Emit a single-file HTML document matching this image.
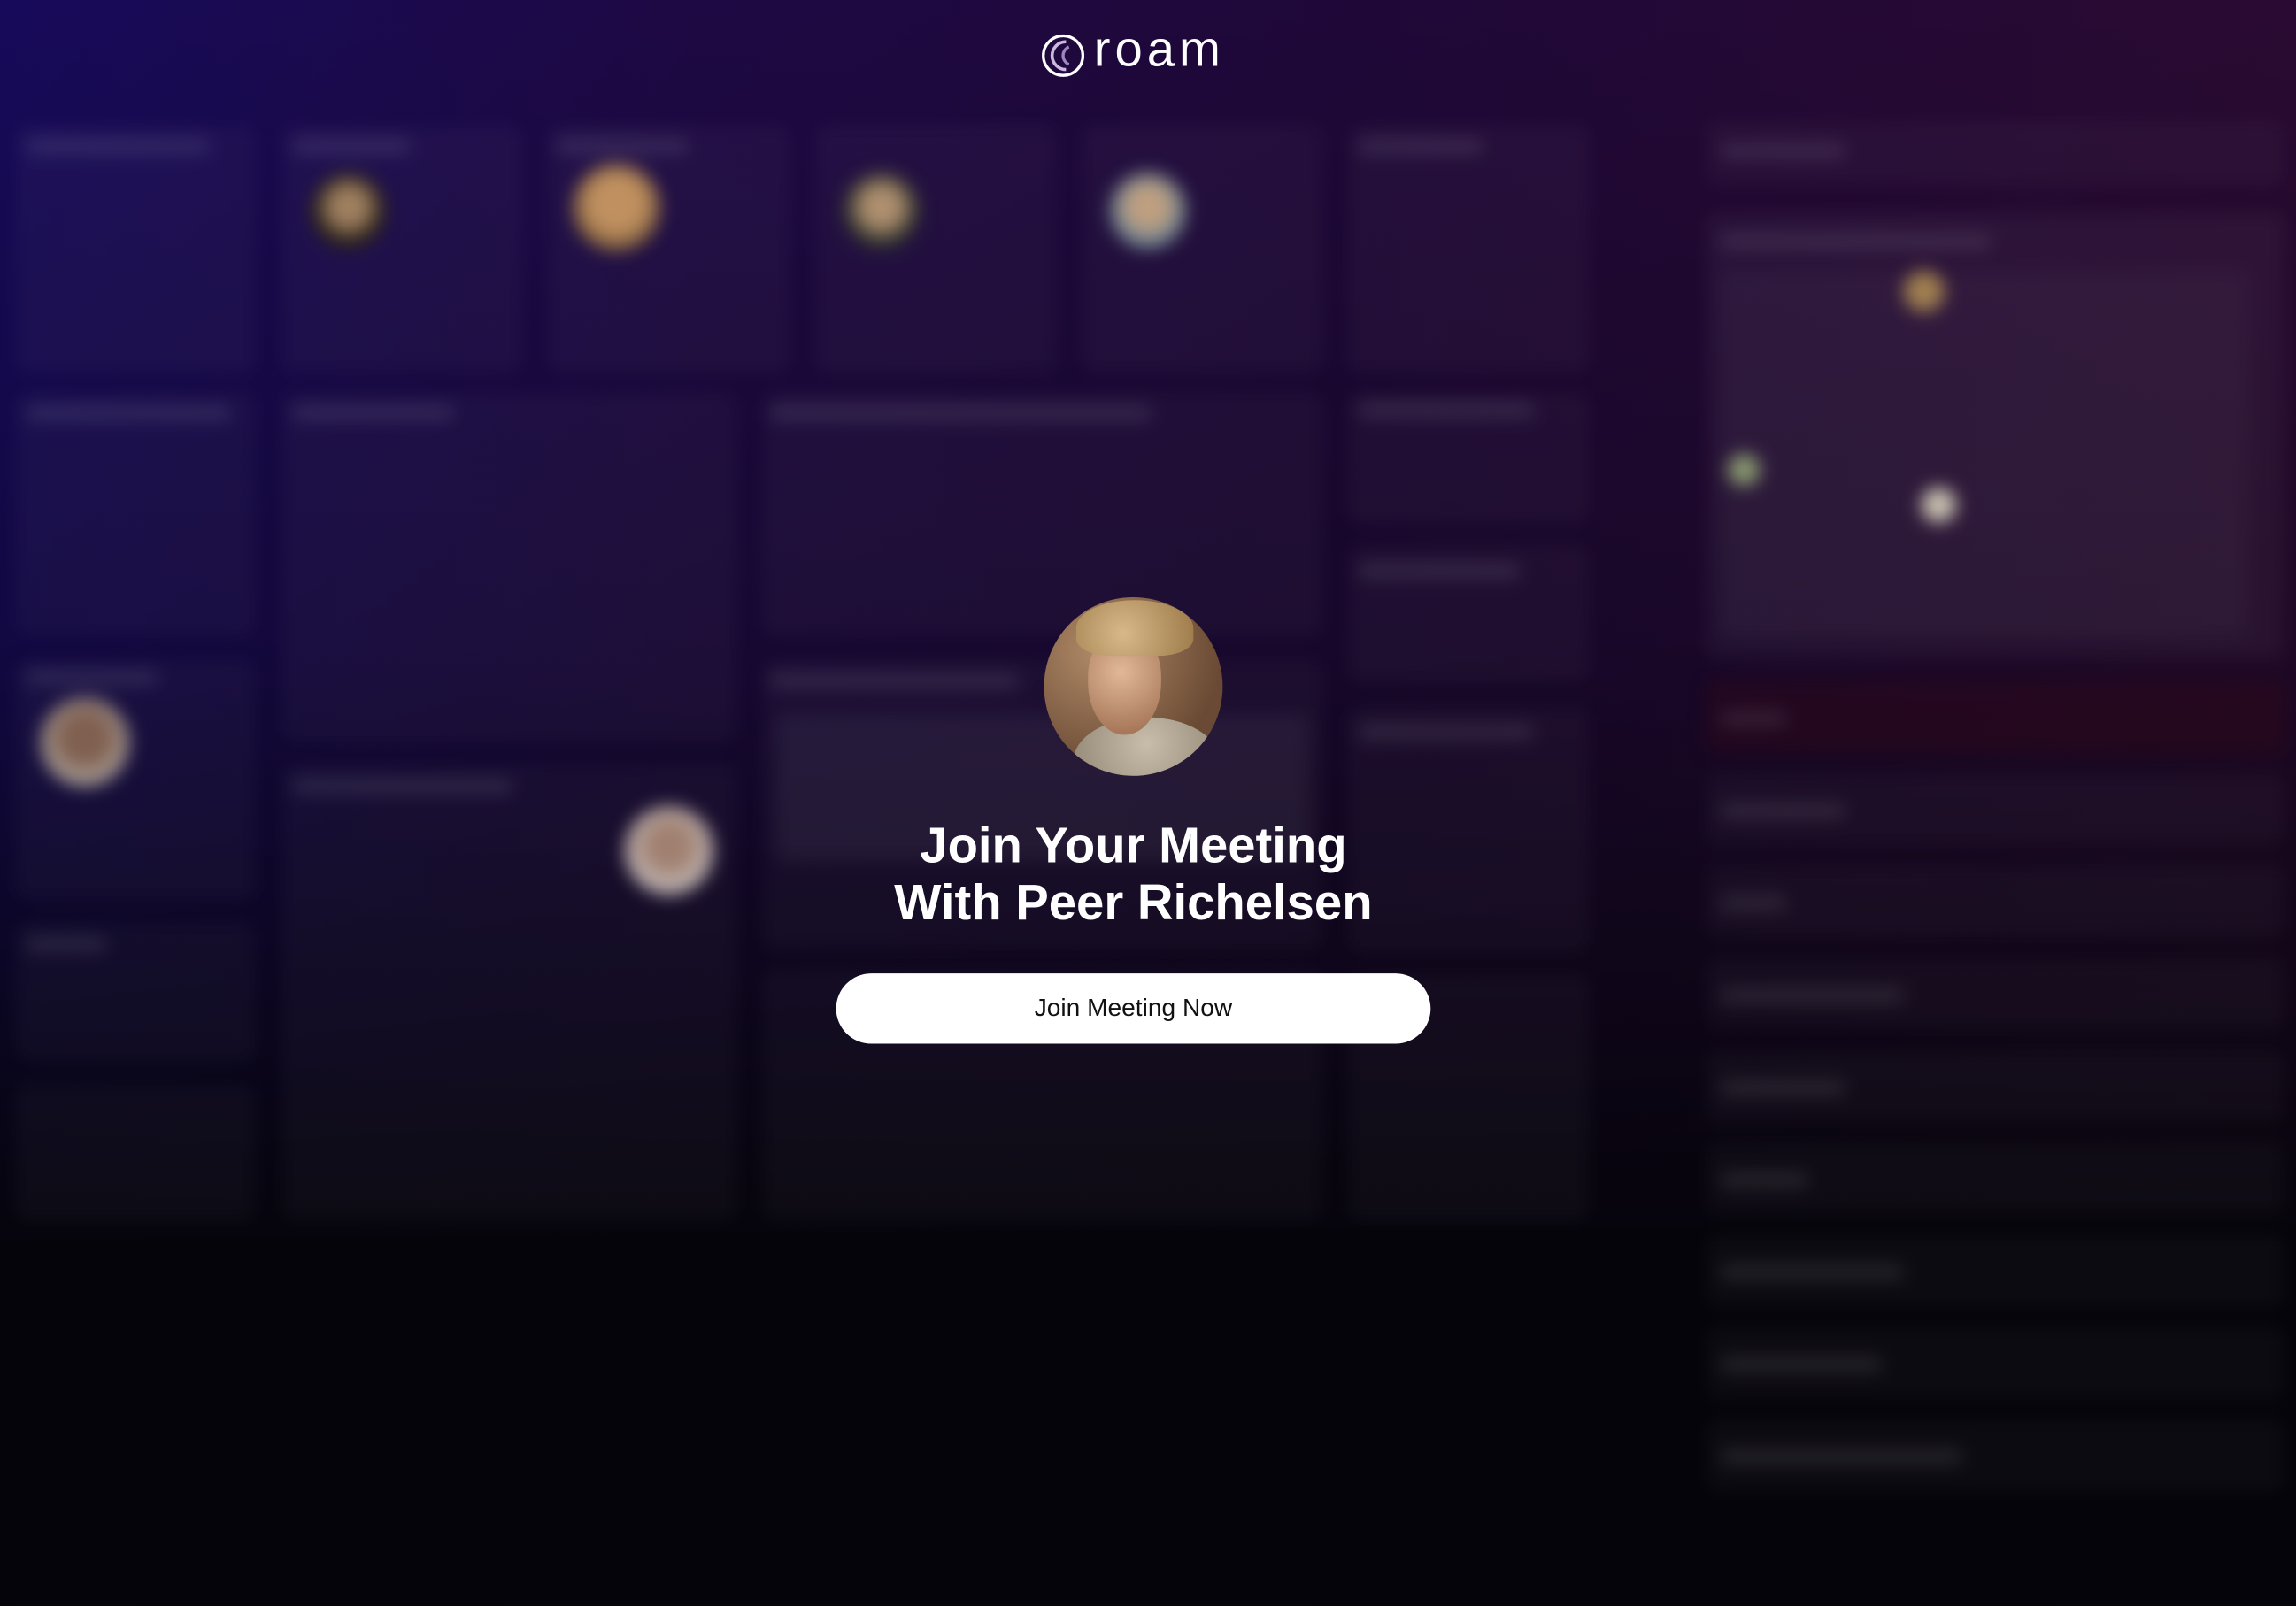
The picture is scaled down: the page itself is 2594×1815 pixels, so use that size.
<!DOCTYPE html>
<html><head><meta charset="utf-8"><style>
html,body{margin:0;padding:0;width:2594px;height:1814px;overflow:hidden;background:#05040a}
#s{position:absolute;left:0;top:0;width:1568px;height:1097px;transform:scale(1.65434);transform-origin:0 0;overflow:hidden;
background:linear-gradient(180deg,rgba(5,4,10,0) 0%,rgba(5,4,10,0.3) 40%,rgba(5,4,10,0.75) 65%,#05040a 78%,#05040a 100%),
linear-gradient(90deg,#170a5a 0%,#1e0944 30%,#1f0838 60%,#2a0a32 100%);}
.bg{position:absolute;inset:0;filter:blur(6px)}
.c{position:absolute;background:rgba(255,255,255,0.03);border-radius:8px}
.r{position:absolute;background:rgba(255,255,255,0.03);border-radius:6px}
.lbl{position:absolute;height:10px;border-radius:4px;background:rgba(255,255,255,0.1)}
.ph{position:absolute;border-radius:50%}
.t{position:absolute;left:0;width:1548px;text-align:center;color:#fff;font-family:"Liberation Sans",sans-serif}
</style></head><body><div id="s">
<div class="bg">
<div class="c" style="left:10px;top:85px;width:165px;height:170px"></div>
<div class="c" style="left:192px;top:85px;width:165px;height:170px"></div>
<div class="c" style="left:374px;top:85px;width:166px;height:170px"></div>
<div class="c" style="left:556px;top:85px;width:166px;height:170px"></div>
<div class="c" style="left:738px;top:85px;width:166px;height:170px"></div>
<div class="c" style="left:920px;top:85px;width:166px;height:170px"></div>
<div class="c" style="left:10px;top:268px;width:165px;height:167px"></div>
<div class="c" style="left:192px;top:268px;width:312px;height:240px"></div>
<div class="c" style="left:520px;top:268px;width:384px;height:167px"></div>
<div class="c" style="left:920px;top:268px;width:166px;height:90px"></div>
<div class="c" style="left:920px;top:372px;width:166px;height:95px"></div>
<div class="c" style="left:10px;top:450px;width:165px;height:165px"></div>
<div class="c" style="left:520px;top:450px;width:384px;height:200px"></div>
<div class="c" style="left:530px;top:488px;width:364px;height:100px;background:rgba(255,255,255,0.05)"></div>
<div class="c" style="left:920px;top:482px;width:166px;height:170px"></div>
<div class="c" style="left:192px;top:522px;width:312px;height:312px"></div>
<div class="c" style="left:10px;top:630px;width:165px;height:95px"></div>
<div class="c" style="left:10px;top:740px;width:165px;height:95px"></div>
<div class="c" style="left:520px;top:662px;width:384px;height:172px"></div>
<div class="c" style="left:920px;top:665px;width:166px;height:170px"></div>
<div class="lbl" style="left:18px;top:95px;width:125px"></div>
<div class="lbl" style="left:200px;top:95px;width:80px"></div>
<div class="lbl" style="left:380px;top:95px;width:90px"></div>
<div class="lbl" style="left:928px;top:95px;width:85px"></div>
<div class="lbl" style="left:18px;top:277px;width:140px"></div>
<div class="lbl" style="left:200px;top:277px;width:110px"></div>
<div class="lbl" style="left:526px;top:277px;width:260px"></div>
<div class="lbl" style="left:928px;top:275px;width:120px"></div>
<div class="lbl" style="left:928px;top:385px;width:110px"></div>
<div class="lbl" style="left:18px;top:458px;width:90px"></div>
<div class="lbl" style="left:526px;top:460px;width:170px"></div>
<div class="lbl" style="left:928px;top:495px;width:120px"></div>
<div class="lbl" style="left:200px;top:532px;width:150px"></div>
<div class="lbl" style="left:18px;top:640px;width:55px"></div>
<div class="ph" style="left:212px;top:118px;width:52px;height:52px;background:radial-gradient(circle at 50% 45%,#a08060 0 30%,#2a2218 60%)"></div>
<div class="ph" style="left:391px;top:112px;width:60px;height:60px;background:radial-gradient(circle at 50% 45%,#c09060 0 40%,#6a5030 75%)"></div>
<div class="ph" style="left:576px;top:118px;width:52px;height:52px;background:radial-gradient(circle at 50% 45%,#b09070 0 30%,#2a3028 65%)"></div>
<div class="ph" style="left:758px;top:118px;width:52px;height:52px;background:radial-gradient(circle at 50% 45%,#c0a080 0 30%,#6a8090 65%)"></div>
<div class="ph" style="left:28px;top:477px;width:60px;height:60px;background:radial-gradient(circle at 50% 45%,#806050 0 35%,#b0a8a0 70%)"></div>
<div class="ph" style="left:427px;top:551px;width:60px;height:60px;background:radial-gradient(circle at 50% 45%,#a08070 0 30%,#c8c0c0 70%)"></div>
<div class="r" style="left:1165px;top:82px;width:395px;height:45px"></div>
<div class="lbl" style="left:1175px;top:98px;width:85px"></div>
<div class="r" style="left:1165px;top:145px;width:395px;height:305px;background:rgba(255,255,255,0.045)"></div>
<div class="lbl" style="left:1175px;top:160px;width:185px"></div>
<div class="r" style="left:1175px;top:185px;width:360px;height:250px;background:rgba(255,255,255,0.03)"></div>
<div class="ph" style="left:1300px;top:185px;width:28px;height:28px;background:#a08050"></div>
<div class="ph" style="left:1180px;top:310px;width:22px;height:22px;background:#8a9a70"></div>
<div class="ph" style="left:1312px;top:333px;width:24px;height:24px;background:#c8c0b0"></div>
<div class="r" style="left:1165px;top:465px;width:395px;height:50px;background:rgba(60,10,20,0.3)"></div>
<div class="r" style="left:1165px;top:528px;width:395px;height:50px"></div>
<div class="r" style="left:1165px;top:591px;width:395px;height:50px"></div>
<div class="r" style="left:1165px;top:654px;width:395px;height:50px"></div>
<div class="r" style="left:1165px;top:717px;width:395px;height:50px"></div>
<div class="r" style="left:1165px;top:780px;width:395px;height:50px"></div>
<div class="r" style="left:1165px;top:843px;width:395px;height:50px"></div>
<div class="r" style="left:1165px;top:906px;width:395px;height:50px"></div>
<div class="r" style="left:1165px;top:969px;width:395px;height:50px"></div>
<div class="lbl" style="left:1175px;top:486px;width:45px"></div>
<div class="lbl" style="left:1175px;top:549px;width:85px"></div>
<div class="lbl" style="left:1175px;top:612px;width:45px"></div>
<div class="lbl" style="left:1175px;top:675px;width:125px"></div>
<div class="lbl" style="left:1175px;top:738px;width:85px"></div>
<div class="lbl" style="left:1175px;top:801px;width:60px"></div>
<div class="lbl" style="left:1175px;top:864px;width:125px"></div>
<div class="lbl" style="left:1175px;top:927px;width:110px"></div>
<div class="lbl" style="left:1175px;top:990px;width:165px"></div>
</div>
<svg style="position:absolute;left:710px;top:22px" width="32" height="32" viewBox="0 0 32 32">
<circle cx="16" cy="16" r="13.5" fill="none" stroke="#fff" stroke-width="2"/>
<path d="M18 6.5 A9.5 9.5 0 0 0 18 25.5" fill="none" stroke="#c9b8e0" stroke-width="2.2"/>
<path d="M20 10 A6.5 6.5 0 0 0 20 22" fill="none" stroke="#9c86c0" stroke-width="2"/>
</svg>
<div style="position:absolute;left:747px;top:15px;font:34px 'Liberation Sans',sans-serif;color:#fff;letter-spacing:3px">roam</div>
<div style="position:absolute;left:713px;top:408px;width:122px;height:122px;border-radius:50%;overflow:hidden;background:radial-gradient(circle at 30% 30%,#b08a68,#6a4a34 70%)">
<div style="position:absolute;left:20px;top:82px;width:100px;height:60px;border-radius:50% 50% 0 0;background:radial-gradient(circle at 50% 30%,#c8bcaa,#8a7e6c)"></div>
<div style="position:absolute;left:30px;top:22px;width:50px;height:72px;border-radius:45% 45% 50% 50%;background:radial-gradient(circle at 45% 40%,#e0b898,#a8785a 80%)"></div>
<div style="position:absolute;left:22px;top:2px;width:80px;height:38px;border-radius:50% 50% 30% 30%;background:radial-gradient(circle at 40% 60%,#d8b888,#9a7848)"></div>
</div>
<div class="t" style="top:559px;font-size:34px;font-weight:bold;line-height:38.5px">Join Your Meeting<br>With Peer Richelsen</div>
<div style="position:absolute;left:571px;top:665px;width:406px;height:48px;border-radius:24px;background:#fff;color:#111;font:17px 'Liberation Sans',sans-serif;line-height:48px;text-align:center">Join Meeting Now</div>
</div></body></html>
